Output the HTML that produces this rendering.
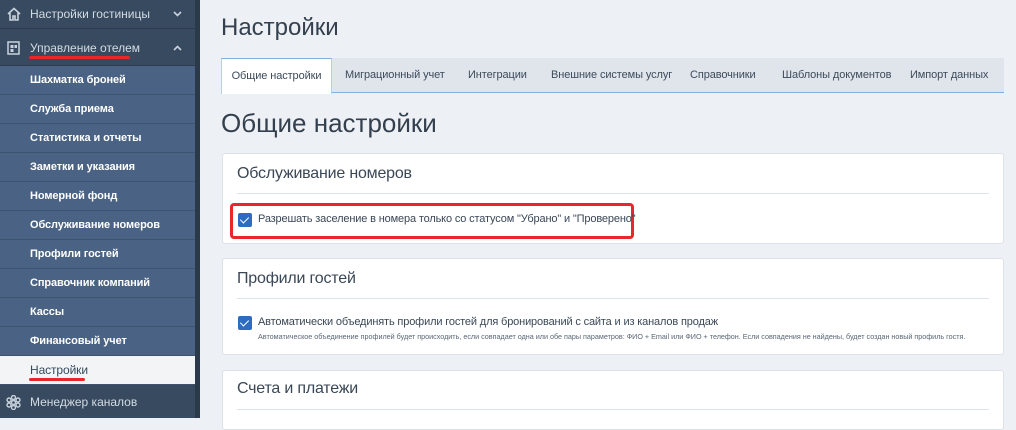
<!DOCTYPE html>
<html><head><meta charset="utf-8"><style>
*{margin:0;padding:0;box-sizing:border-box}
body{width:1016px;height:418px;overflow:hidden;background:#edf0f4;font-family:"Liberation Sans",sans-serif;position:relative}
.sb{position:absolute;left:0;top:0;width:195px;height:418px;background:#374a5f}
.sbar{position:absolute;left:195px;top:0;width:5px;height:418px;background:#2b3a4b}
.top{position:absolute;left:0;width:195px;color:#d4dbe3;font-size:12px;border-bottom:1px solid #2c3c4e}
.top span{position:absolute;left:30px}
.top svg.ch{position:absolute;left:173px}
.sub{position:absolute;left:0;width:195px;height:29px;background:#4a6283;color:#fff;font-size:11px;font-weight:bold;line-height:28px;padding-left:30px;border-bottom:1px solid #3d5370;letter-spacing:-0.1px}
.act{background:#f3f4f6;color:#34495e;font-weight:normal;font-size:12px}
.ul{position:absolute;height:3px;background:#e8262b;border-radius:2px}
.main{position:absolute;left:221px}
.tabs{position:absolute;left:221px;top:58px;width:783px;height:35px;background:#e0e5ec;border-bottom:1px solid #7fb0e0}
.tab{position:absolute;top:0;height:35px;line-height:34px;font-size:11px;color:#3c4a5a;letter-spacing:-0.1px}
.card{position:absolute;left:222px;width:782px;background:#fff;border:1px solid #dde2e8;border-radius:3px}
.ct{position:absolute;left:14px;font-size:16px;color:#3a4756;letter-spacing:-0.2px}
.hr{position:absolute;left:14px;right:14px;height:1px;background:#dde3ea}
.cb{position:absolute;width:14px;height:14px;background:#2d6cc0;border-radius:2px}
.cb:after{content:"";position:absolute;left:4px;top:2px;width:4px;height:7px;border:solid #fff;border-width:0 1.5px 1.5px 0;transform:rotate(45deg)}
.txt{position:absolute;left:35px;font-size:11px;color:#3a4756;letter-spacing:-0.15px;white-space:nowrap}
</style></head><body>
<div class="sb"></div><div class="sbar"></div>
<div class="top" style="top:0;height:29px;line-height:28px"><svg style="position:absolute;left:7px;top:7px" width="14" height="14" viewBox="0 0 14 14"><path d="M1 7L7 1.5 13 7M3 6v7h3V9h2v4h3V6" fill="none" stroke="#c9d2dc" stroke-width="1.6"/></svg><span>Настройки гостиницы</span><svg class="ch" style="top:11px" width="9" height="6" viewBox="0 0 9 6"><path d="M1 1l3.5 3.5L8 1" fill="none" stroke="#c9d2dc" stroke-width="1.6"/></svg></div>
<div class="top" style="top:33px;height:33px;line-height:30px"><svg style="position:absolute;left:7px;top:8px" width="14" height="14" viewBox="0 0 14 14"><rect x="1" y="1" width="11" height="12" fill="none" stroke="#c9d2dc" stroke-width="1.5"/><rect x="3.5" y="4" width="3" height="3" fill="#c9d2dc"/><rect x="7.5" y="4" width="2.5" height="3" fill="#c9d2dc"/><rect x="3.5" y="8" width="3" height="3" fill="#c9d2dc"/></svg><span>Управление отелем</span><svg class="ch" style="top:12px" width="9" height="6" viewBox="0 0 9 6"><path d="M1 5l3.5-3.5L8 5" fill="none" stroke="#c9d2dc" stroke-width="1.6"/></svg></div>
<div class="ul" style="left:29px;top:56px;width:101px"></div>
<div class="sub" style="top:66px">Шахматка броней</div>
<div class="sub" style="top:95px">Служба приема</div>
<div class="sub" style="top:124px">Статистика и отчеты</div>
<div class="sub" style="top:153px">Заметки и указания</div>
<div class="sub" style="top:182px">Номерной фонд</div>
<div class="sub" style="top:211px">Обслуживание номеров</div>
<div class="sub" style="top:240px">Профили гостей</div>
<div class="sub" style="top:269px">Справочник компаний</div>
<div class="sub" style="top:298px">Кассы</div>
<div class="sub" style="top:327px">Финансовый учет</div>
<div class="sub act" style="top:356px">Настройки</div>
<div class="ul" style="left:29px;top:378px;width:56px"></div>
<div class="top" style="top:386px;height:32px;line-height:32px;border:0"><svg style="position:absolute;left:6px;top:9px" width="15" height="15" viewBox="0 0 15 15" fill="none" stroke="#c9d2dc" stroke-width="1.4"><circle cx="7.5" cy="7.5" r="2"/><circle cx="7.5" cy="2.5" r="2"/><circle cx="7.5" cy="12.5" r="2"/><circle cx="3" cy="5" r="2"/><circle cx="12" cy="5" r="2"/><circle cx="3" cy="10" r="2"/><circle cx="12" cy="10" r="2"/></svg><span>Менеджер каналов</span></div>

<div class="main" style="top:14px;font-size:24px;color:#34404e">Настройки</div>
<div class="tabs">
<div class="tab" style="left:0;width:111px;background:#fff;border-top:1px solid #7fb0e0;border-left:1px solid #b9cfe6;border-right:1px solid #b9cfe6;height:36px;text-align:center">Общие настройки</div>
<div class="tab" style="left:124px">Миграционный учет</div>
<div class="tab" style="left:247px">Интеграции</div>
<div class="tab" style="left:330px">Внешние системы услуг</div>
<div class="tab" style="left:469px">Справочники</div>
<div class="tab" style="left:561px">Шаблоны документов</div>
<div class="tab" style="left:689px">Импорт данных</div>
</div>
<div class="main" style="top:108px;font-size:26px;color:#34404e">Общие настройки</div>

<div class="card" style="top:153px;height:91px">
<div class="ct" style="top:11px">Обслуживание номеров</div>
<div class="hr" style="top:39px"></div>
<div style="position:absolute;left:7px;top:49px;width:404px;height:36px;border:3px solid #e8262b;border-radius:4px"></div>
<div class="cb" style="left:15px;top:59px"></div>
<div class="txt" style="top:59px">Разрешать заселение в номера только со статусом "Убрано" и "Проверено"</div>
</div>

<div class="card" style="top:258px;height:97px">
<div class="ct" style="top:11px">Профили гостей</div>
<div class="hr" style="top:39px"></div>
<div class="cb" style="left:15px;top:57px"></div>
<div class="txt" style="top:57px">Автоматически объединять профили гостей для бронирований с сайта и из каналов продаж</div>
<div style="position:absolute;left:35px;top:73px;font-size:7.2px;color:#5a6673;white-space:nowrap">Автоматическое объединение профилей будет происходить, если совпадает одна или обе пары параметров: ФИО + Email или ФИО + телефон. Если совпадения не найдены, будет создан новый профиль гостя.</div>
</div>

<div class="card" style="top:370px;height:60px">
<div class="ct" style="top:9px">Счета и платежи</div>
<div class="hr" style="top:38px"></div>
</div>
</body></html>
